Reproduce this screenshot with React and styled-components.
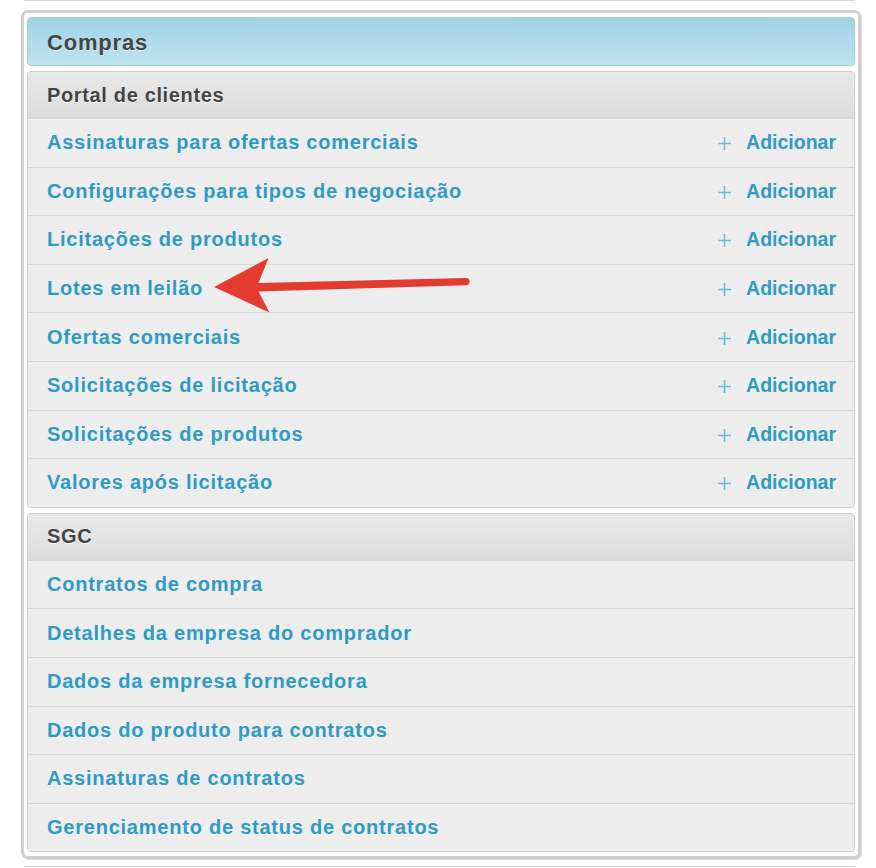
import React from "react";
import styled, { createGlobalStyle } from "styled-components";

const Global = createGlobalStyle`
  html, body { margin: 0; padding: 0; background: #fff; }
  body { font-family: "Liberation Sans", Arial, Helvetica, sans-serif; }
`;

const Page = styled.div`
  position: relative;
  width: 876px;
  height: 868px;
  overflow: hidden;
  background: #fff;
`;

const EdgeLine = styled.div`
  height: 1px;
  margin: ${(p) => p.$mt || 0}px 21px 0 24px;
  background: #d6d6d6;
`;

const Frame = styled.div`
  margin: 9px 15px 0 21px;
  width: 840px;
  box-sizing: border-box;
  border: 3px solid #cfcfcf;
  border-radius: 7px;
  padding: 4px 3px 4px 3px;
  box-shadow: 1px 1px 1px #d9d9d9;
  display: flex;
  flex-direction: column;
  gap: 5px;
  background: #fff;
`;

const ModuleHeader = styled.div`
  height: 49px;
  box-sizing: border-box;
  border: 1px solid #a3cfdf;
  border-radius: 4px;
  background: linear-gradient(to bottom, #9fd3e6, #bfe3ef);
  display: flex;
  align-items: center;
  padding: 3px 0 0 19px;
  font-size: 22px;
  font-weight: bold;
  color: #444;
  letter-spacing: 0.8px;
  text-shadow: 0 1px 0 rgba(255, 255, 255, 0.5);
`;

const Section = styled.div`
  border: 1px solid #cdcdcd;
  border-radius: 4px;
  overflow: hidden;
  background: #ededed;
`;

const SectionHeader = styled.div`
  height: 46px;
  box-sizing: border-box;
  background: linear-gradient(to bottom, #e9e9e9, #dcdcdc);
  display: flex;
  align-items: center;
  padding: 0 19px;
  font-size: 20px;
  font-weight: bold;
  color: #444;
  letter-spacing: 0.65px;
  text-shadow: 0 1px 0 #fff;
`;

const Row = styled.div`
  height: 48.6px;
  box-sizing: border-box;
  border-top: 1px solid #d6d6d6;
  display: flex;
  align-items: center;
  justify-content: space-between;
  padding: 0 18px 0 19px;
  background: #ededed;
`;

const LinkText = styled.a`
  font-size: 20px;
  font-weight: bold;
  color: #2f9bc2;
  letter-spacing: 0.77px;
  text-decoration: none;
`;

const AddLink = styled.a`
  display: flex;
  align-items: center;
  gap: 14px;
  font-size: 19.5px;
  font-weight: bold;
  color: #2f9bc2;
  letter-spacing: 0;
  text-decoration: none;
`;

const PlusIcon = styled.svg`
  width: 15px;
  height: 15px;
  display: block;
  margin-top: 2px;
`;

const Arrow = styled.svg`
  position: absolute;
  left: 0;
  top: 0;
  pointer-events: none;
`;

const Plus = () => (
  <PlusIcon viewBox="0 0 15 15">
    <path d="M7.5 1v13M1 7.5h13" stroke="#6bbcd6" strokeWidth="1.6" fill="none" />
  </PlusIcon>
);

const portal = [
  "Assinaturas para ofertas comerciais",
  "Configurações para tipos de negociação",
  "Licitações de produtos",
  "Lotes em leilão",
  "Ofertas comerciais",
  "Solicitações de licitação",
  "Solicitações de produtos",
  "Valores após licitação",
];

const sgc = [
  "Contratos de compra",
  "Detalhes da empresa do comprador",
  "Dados da empresa fornecedora",
  "Dados do produto para contratos",
  "Assinaturas de contratos",
  "Gerenciamento de status de contratos",
];

export default function App() {
  return (
    <Page>
      <Global />
      <EdgeLine />
      <Frame>
        <ModuleHeader>Compras</ModuleHeader>
        <Section>
          <SectionHeader>Portal de clientes</SectionHeader>
          {portal.map((t) => (
            <Row key={t}>
              <LinkText>{t}</LinkText>
              <AddLink>
                <Plus />
                Adicionar
              </AddLink>
            </Row>
          ))}
        </Section>
        <Section>
          <SectionHeader>SGC</SectionHeader>
          {sgc.map((t) => (
            <Row key={t}>
              <LinkText>{t}</LinkText>
            </Row>
          ))}
        </Section>
      </Frame>
      <EdgeLine $mt={7} />
      <Arrow width="876" height="868" viewBox="0 0 876 868">
        <path
          d="M214 287 L268.5 258 L258.5 283 L466 278 A3.6 3.6 0 0 1 466 285.2 L258.5 291.5 L269.5 312.5 Z"
          fill="#e43b30"
        />
      </Arrow>
    </Page>
  );
}
